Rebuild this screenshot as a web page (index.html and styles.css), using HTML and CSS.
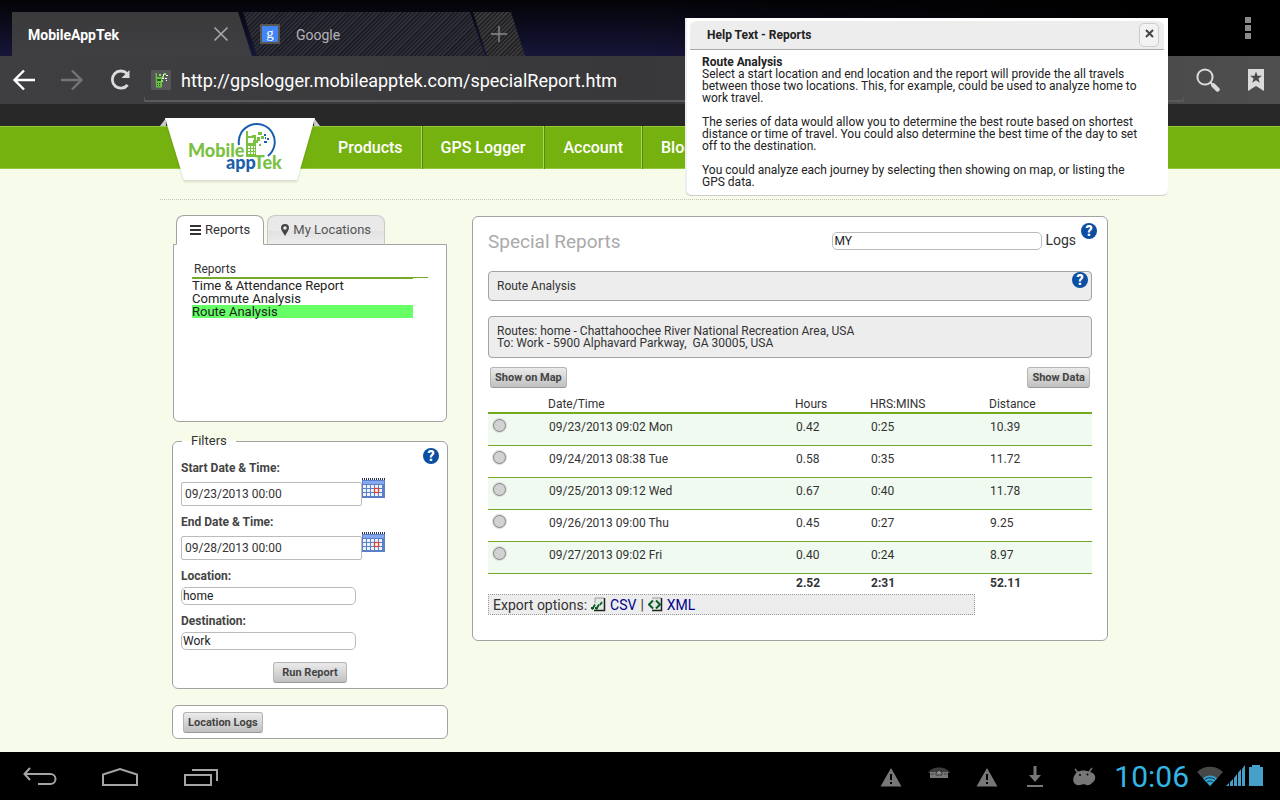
FILE: index.html
```html
<!DOCTYPE html>
<html lang="en">
<head>
<meta charset="utf-8">
<meta name="viewport" content="width=device-width, initial-scale=1">
<title>MobileAppTek</title>
<link rel="stylesheet" href="styles.css">
</head>
<body>
<header class="browser">
  <div class="tabbar">
    <div class="tab tab-active">
      <span class="tab-title">MobileAppTek</span>
      <button class="icon-btn" aria-label="Close tab"><svg width="16" height="16" viewBox="0 0 16 16" fill="none" stroke="#aaaaac" stroke-width="1.6"><path d="M1.5 1.5l13 13M14.500 1.500l-13 13"/></svg></button>
    </div>
    <div class="tab tab-idle">
      <svg width="20" height="20" viewBox="0 0 20 20"><rect width="20" height="20" rx="1" fill="#5a554e"/><rect x="2" y="2" width="16" height="16" fill="#4285f4"/><text x="10" y="14" text-anchor="middle" class="g-mark">g</text></svg>
      <span class="tab-title">Google</span>
    </div>
    <button class="tab tab-new" aria-label="New tab"><svg width="18" height="18" viewBox="0 0 18 18" fill="none" stroke="#8b8b8e" stroke-width="1.4"><path d="M9 1v16M1 9h16"/></svg></button>
    <button class="icon-btn tab-menu" aria-label="Menu"><svg width="6" height="22" viewBox="0 0 6 22" fill="#8a8a8a"><path d="M0 0h6v6H0zM0 8h6v6H0zM0 16h6v6H0z"/></svg></button>
  </div>
  <div class="toolbar">
    <button class="icon-btn" aria-label="Back"><svg width="24" height="24" viewBox="0 0 24 24" fill="none" stroke="#fff" stroke-width="2.4"><path d="M12 2.500L2.500 12l9.500 9.500M3 12h20"/></svg></button>
    <button class="icon-btn" aria-label="Forward"><svg width="24" height="24" viewBox="0 0 24 24" fill="none" stroke="#747476" stroke-width="2.400"><path d="M12 2.500l9.500 9.500-9.500 9.500M21 12H1"/></svg></button>
    <button class="icon-btn" aria-label="Reload"><svg width="24" height="24" viewBox="0 0 24 24"><path d="M19 5.500A8.600 8.600 0 1 0 19.600 17" fill="none" stroke="#dcdcdc" stroke-width="2.800"/><path d="M21.500 2v8h-8z" fill="#dcdcdc"/></svg></button>
    <div class="address">
      <svg width="20" height="20" viewBox="0 0 20 20"><rect width="20" height="20" rx="1" fill="#57575a"/><path d="M4.500 3h1.500v4h5v10.500H5z" fill="#6abd45"/><path d="M6 9h4v2H6zM6 13h1v1H6zM8 13h1v1H8zM6 15h1v1H6zM8 15h1v1H8z" fill="#265a1e"/><path d="M8 4h2v2H8zM11 6h2v2h-2zM13 3h2v2h-2zM10 10h2v2h-2z" fill="#8fdc68"/><path d="M12 4h1v2h-1zM15 5h2v1h-2zM14 8h2v1h-2zM11 8h2v1h-2zM15 10h1v1h-1z" fill="#fff"/></svg>
      <input class="url" aria-label="Address" value="http://gpslogger.mobileapptek.com/specialReport.htm">
    </div>
    <button class="icon-btn" aria-label="Search"><svg width="24" height="24" viewBox="0 0 24 24" fill="none" stroke="#dadada"><circle cx="9" cy="9" r="7.600" stroke-width="2"/><path d="M14.500 14.500l3 3" stroke-width="2"/><path d="M17.500 17.500l4 4" stroke-width="4.500" stroke-linecap="round"/></svg></button>
    <button class="icon-btn" aria-label="Bookmarks"><svg width="16" height="22" viewBox="0 0 16 22"><path d="M0 0h16v22l-8-5-8 5z" fill="#dadada"/><path d="M8 2.500l1.500 4.200 4.500.1-3.600 2.700 1.300 4.300L8 11.300l-3.700 2.500 1.300-4.300L2 6.800l4.500-.1z" fill="#4a4a4a"/></svg></button>
  </div>
</header>

<div class="site-head">
  <div class="wrap head-row">
    <a class="logo" href="#" aria-label="Mobile appTek">
      <svg width="160" height="68" viewBox="0 0 160 68">
        <path d="M0 8l6-8v8zM160 8l-6-8v8z" fill="#c9c9c9"/>
        <path class="logo-plate" d="M5 0h150l-18 62H24z" fill="#fff"/>
        <path d="M79 27A18 18 0 1 1 108 38" fill="none" stroke="#1d5fae" stroke-width="2"/>
        <text x="28" y="39" class="logo-text green">Mobile</text>
        <path d="M86 13h2v5h8v21H86z" fill="#7ac142"/>
        <path d="M88 20h6v5h-6zM88 28h2v2h-2zM91 28h2v2h-2zM94 28h1v2h-1zM88 31h2v2h-2zM91 31h2v2h-2zM94 31h1v2h-1zM88 34h2v2h-2zM91 34h2v2h-2zM94 34h1v2h-1z" fill="#fff"/>
        <path d="M92 17h4v3h-4zM97 19h3v4h-3zM98 14h4v3h-4zM101 18h3v3h-3zM93 22h5v3h-5zM99 26h2v2h-2z" fill="#7ac142"/>
        <path d="M104 16h2v2h-2zM107 20h2v2h-2zM104 23h3v2h-3zM105 19h1v2h-1z" fill="#1d5fae"/>
        <text x="66" y="51" class="logo-text"><tspan class="blue">app</tspan><tspan class="green">Tek</tspan></text>
      </svg>
    </a>
    <nav class="nav"><a href="#">Products</a><a href="#">GPS Logger</a><a href="#">Account</a><a href="#">Blog</a></nav>
  </div>
</div>

<main class="wrap page">
  <aside class="side">
    <section class="tabs-box">
      <div class="side-tabs">
        <button class="side-tab on"><svg width="11" height="10" viewBox="0 0 11 10" fill="#333"><path d="M0 0h11v2H0zM0 4h11v2H0zM0 8h11v2H0z"/></svg>Reports</button>
        <button class="side-tab"><svg width="8" height="12" viewBox="0 0 8 12" fill="#444"><path fill-rule="evenodd" d="M4 0a4 4 0 0 1 4 4c0 2-2.500 5-4 8C2.500 9 0 6 0 4a4 4 0 0 1 4-4zm0 2.200a1.800 1.800 0 1 0 0 3.600 1.800 1.800 0 0 0 0-3.600z"/></svg>My Locations</button>
      </div>
      <div class="side-panel">
        <h3 class="list-head">Reports</h3>
        <ul class="report-list"><li>Time &amp; Attendance Report</li><li>Commute Analysis</li><li class="picked">Route Analysis</li></ul>
      </div>
    </section>

    <fieldset class="filters">
      <legend>Filters</legend>
      <button class="help filters-help" aria-label="Help">?</button>
      <label for="start">Start Date &amp; Time:</label>
      <div class="date-row">
        <input id="start" class="date" value="09/23/2013 00:00">
        <button class="icon-btn" aria-label="Pick start date"><svg width="23" height="20" viewBox="0 0 23 20"><rect y="2" width="23" height="18" fill="#5c80c8"/><path d="M1 3h21v3H1z" fill="#86a8ee"/><path d="M0 1h23" stroke="#26314f" stroke-width="2" stroke-dasharray="1 1"/><path d="M1 7h3v3H1zM5 7h3v3H5zM9 7h3v3H9zM13 7h3v3h-3zM17 7h3v3h-3zM1 11h3v3H1zM5 11h3v3H5zM9 11h3v3H9zM13 11h3v3h-3zM17 11h3v3h-3zM1 15h3v3H1zM5 15h3v3H5zM9 15h3v3H9zM13 15h3v3h-3zM17 15h3v3h-3z" fill="#edf4ff"/><rect x="12.500" y="10.500" width="4" height="4" fill="#fff" stroke="#e0442c" stroke-width="1.300"/></svg></button>
      </div>
      <label for="end">End Date &amp; Time:</label>
      <div class="date-row">
        <input id="end" class="date" value="09/28/2013 00:00">
        <button class="icon-btn" aria-label="Pick end date"><svg width="23" height="20" viewBox="0 0 23 20"><rect y="2" width="23" height="18" fill="#5c80c8"/><path d="M1 3h21v3H1z" fill="#86a8ee"/><path d="M0 1h23" stroke="#26314f" stroke-width="2" stroke-dasharray="1 1"/><path d="M1 7h3v3H1zM5 7h3v3H5zM9 7h3v3H9zM13 7h3v3h-3zM17 7h3v3h-3zM1 11h3v3H1zM5 11h3v3H5zM9 11h3v3H9zM13 11h3v3h-3zM17 11h3v3h-3zM1 15h3v3H1zM5 15h3v3H5zM9 15h3v3H9zM13 15h3v3h-3zM17 15h3v3h-3z" fill="#edf4ff"/><rect x="12.500" y="10.500" width="4" height="4" fill="#fff" stroke="#e0442c" stroke-width="1.300"/></svg></button>
      </div>
      <label for="loc">Location:</label>
      <input id="loc" class="field" value="home">
      <label for="dest">Destination:</label>
      <input id="dest" class="field" value="Work">
      <div class="run-row"><button class="btn">Run Report</button></div>
    </fieldset>

    <section class="card logs"><button class="btn">Location Logs</button></section>
  </aside>

  <section class="card report">
    <button class="help report-help" aria-label="Help">?</button>
    <div class="report-top">
      <h1>Special Reports</h1>
      <div class="logs-pick"><input id="who" class="field" value="MY"><label for="who">Logs</label></div>
    </div>
    <div class="strip name-strip">Route Analysis<button class="help strip-help" aria-label="Help">?</button></div>
    <div class="strip route-strip">Routes: home - Chattahoochee River National Recreation Area, USA<br>To: Work - 5900 Alphavard Parkway,&nbsp; GA 30005, USA</div>
    <div class="actions"><button class="btn">Show on Map</button><button class="btn">Show Data</button></div>
    <table class="trips">
      <colgroup><col class="c-pick"><col class="c-date"><col class="c-hours"><col class="c-mins"><col></colgroup>
      <thead><tr><th></th><th>Date/Time</th><th>Hours</th><th>HRS:MINS</th><th>Distance</th></tr></thead>
      <tbody>
        <tr><td><input type="radio" name="trip" aria-label="09/23/2013"></td><td>09/23/2013 09:02 Mon</td><td>0.42</td><td>0:25</td><td>10.39</td></tr>
        <tr><td><input type="radio" name="trip" aria-label="09/24/2013"></td><td>09/24/2013 08:38 Tue</td><td>0.58</td><td>0:35</td><td>11.72</td></tr>
        <tr><td><input type="radio" name="trip" aria-label="09/25/2013"></td><td>09/25/2013 09:12 Wed</td><td>0.67</td><td>0:40</td><td>11.78</td></tr>
        <tr><td><input type="radio" name="trip" aria-label="09/26/2013"></td><td>09/26/2013 09:00 Thu</td><td>0.45</td><td>0:27</td><td>9.25</td></tr>
        <tr><td><input type="radio" name="trip" aria-label="09/27/2013"></td><td>09/27/2013 09:02 Fri</td><td>0.40</td><td>0:24</td><td>8.97</td></tr>
      </tbody>
      <tfoot><tr><td></td><td></td><td>2.52</td><td>2:31</td><td>52.11</td></tr></tfoot>
    </table>
    <div class="export">
      <span>Export options:</span>
      <a href="#"><svg width="15" height="15" viewBox="0 0 15 15"><path d="M4 1h9v12H3z" fill="#dfe8e2"/><path d="M13.500 1v12.500H3" fill="none" stroke="#222" stroke-width="1.500"/><path d="M4 1v5M4 1h9" stroke="#9a9a9a"/><path d="M1 12.500l3-5M5 12.500l3-5M0 11h3M4 11h3M9 8l2-3" stroke="#0c5a2a" stroke-width="1.800"/></svg>CSV</a>
      <span>|</span>
      <a href="#"><svg width="15" height="15" viewBox="0 0 15 15"><path d="M4 1h9v12H4z" fill="#dfe8e2"/><path d="M13.500 1v12.500H4" fill="none" stroke="#222" stroke-width="1.500"/><path d="M4 1h9" stroke="#9a9a9a"/><path d="M5 3.500L1 7.500l4 4M8 3.500l4 4-4 4" fill="none" stroke="#0c5a2a" stroke-width="2"/></svg>XML</a>
    </div>
  </section>
</main>

<footer class="system">
  <button class="icon-btn" aria-label="Back"><svg width="34" height="20" viewBox="0 0 34 20" fill="none" stroke="#a5a5a5" stroke-width="2"><path d="M7 1L1.500 7 7 13M2 7h25.500a5 5 0 0 1 0 10H15"/></svg></button>
  <button class="icon-btn" aria-label="Home"><svg width="38" height="20" viewBox="0 0 38 20" fill="none" stroke="#a5a5a5" stroke-width="2"><path d="M2 18V7.500L19 2l17 5.500V18z"/></svg></button>
  <button class="icon-btn" aria-label="Recent apps"><svg width="36" height="20" viewBox="0 0 36 20" fill="none" stroke="#a5a5a5" stroke-width="2"><path d="M2 8h26v10H2zM9 3h25v11"/></svg></button>
  <div class="status">
    <div class="notices">
      <svg width="22" height="20" viewBox="0 0 22 20"><path d="M11 1l10.500 18.500H.5z" fill="#777"/><path d="M10 7h2v6h-2zM10 15h2v2h-2z" fill="#000"/></svg>
      <svg width="22" height="20" viewBox="0 0 22 20"><path d="M0 6C3-1.500 19-1.500 22 6z" fill="#3c3c3c"/><path d="M2 5h18v6H2z" fill="#777"/><path d="M8 6l3-3 3 3v2H8z" fill="#888" stroke="#333"/><path d="M3 7h3M16 7h3" stroke="#444"/></svg>
      <svg width="22" height="20" viewBox="0 0 22 20"><path d="M11 1l10.500 18.500H.5z" fill="#777"/><path d="M10 7h2v6h-2zM10 15h2v2h-2z" fill="#000"/></svg>
      <svg width="22" height="22" viewBox="0 0 22 22"><path d="M9.500 0h3v9H17l-6 7-6-7h4.500zM3 19h16v2H3z" fill="#777"/></svg>
      <svg width="24" height="20" viewBox="0 0 24 20"><path d="M3 2l3 4M20 1l-3 4" stroke="#777" stroke-width="1.400"/><path d="M5 5c4-2 9-2 13 0 4 1 6 4 5 7-1 3-2 3-4 5-3 2-5 1-7 0-3 1-6 2-9 0-3-3-2-8 2-12z" fill="#777"/><circle cx="8" cy="8" r="1" fill="#000"/><circle cx="15.500" cy="7.500" r="1" fill="#000"/></svg>
    </div>
    <span class="clock">10:06</span>
    <div class="signals">
      <svg width="26" height="20" viewBox="0 0 26 20"><path d="M0 6C7-1 19-1 26 6L13 20z" fill="#474747"/><path d="M6 12.500c4-4 10-4 14 0L13 20z" fill="#35a5d3"/><path d="M7.500 14c3-3 8-3 11 0M9.500 16.500c2-2 5-2 7 0" fill="none" stroke="#0a2c3a"/></svg>
      <svg width="20" height="22" viewBox="0 0 20 22" fill="#469fc9"><path d="M0 21l3-3v3zM4 17l3-3v7H4zM8 13l3-4v12H8zM12 8l3-4v17h-3zM16 4l3-4v21h-3z"/></svg>
      <svg width="14" height="22" viewBox="0 0 14 22" fill="#469fc9"><path d="M3 0h8v2h3v19H0V2h3z"/></svg>
    </div>
  </div>
</footer>

<div class="dialog" role="dialog" aria-labelledby="dlg">
  <div class="dialog-head"><h2 id="dlg">Help Text - Reports</h2><button class="dialog-close" aria-label="Close"><svg width="9" height="9" viewBox="0 0 9 9" stroke="#444" stroke-width="2"><path d="M1 1l7 7M8 1L1 8"/></svg></button></div>
  <div class="dialog-body">
    <h4>Route Analysis</h4>
    <p>Select a start location and end location and the report will provide the all travels<br>between those two locations. This, for example, could be used to analyze home to<br>work travel.</p>
    <p>The series of data would allow you to determine the best route based on shortest<br>distance or time of travel. You could also determine the best time of the day to set<br>off to the destination.</p>
    <p>You could analyze each journey by selecting then showing on map, or listing the<br>GPS data.</p>
  </div>
</div>
</body>
</html>
```
FILE: styles.css
```css
* { box-sizing: border-box; }
body { margin: 0; min-height: 100vh; display: flex; flex-direction: column; position: relative; background: #f7fbea; color: #333; font: 12px/12px Roboto, "Liberation Sans", sans-serif; }
h1, h2, h3, h4, p, ul { margin: 0; padding: 0; }
button, input { font: inherit; color: inherit; margin: 0; }
svg { display: block; flex: none; }
.icon-btn { flex: none; display: grid; place-items: center; padding: 0; border: 0; background: none; }

.browser { color: #fff; }
.tabbar { display: flex; height: 56px; padding: 12px 29px 0 12px; background: linear-gradient(90deg, rgba(0,0,0,0) 50%, #000 90%), linear-gradient(#030306, #17163a); }
.tab { display: flex; align-items: center; font-size: 14px; line-height: 20px; }
.tab-active { width: 240px; padding: 0 23px 0 16px; justify-content: space-between; background: linear-gradient(#3a3a3b, #3f3f43); clip-path: polygon(0 0, 226px 0, 100% 100%, 0 100%); font-weight: 700; }
.tab-title { padding-top: 1px; }
.tab-idle, .tab-new { background: repeating-linear-gradient(135deg, #3b3b3d 0, #3b3b3d 1px, #202022 2px, #202022 3px); }
.tab-idle { width: 242px; margin-left: -9px; padding-left: 17px; gap: 16px; color: #b4b4b8; background: repeating-linear-gradient(135deg, #303038 0, #303038 1px, #1b1b25 2px, #1b1b25 3px); clip-path: polygon(0 0, 227px 0, 100% 100%, 14px 100%); }
.tab-new { width: 52px; margin-left: -12px; padding: 0; border: 0; justify-content: center; clip-path: polygon(0 0, 38px 0, 100% 100%, 14px 100%); }
.g-mark { font: 15px "Liberation Serif", serif; fill: #fff; }
.tab-menu { margin-left: auto; padding-bottom: 12px; }
.toolbar { display: flex; align-items: center; height: 48px; padding: 0 12px; background: linear-gradient(90deg, #3f3f42, #38383b 50%, #4f4f4f); }
.toolbar > .icon-btn { width: 24px; }
.toolbar > .icon-btn + .icon-btn { margin-left: 24px; }
.address { flex: 1; display: flex; align-items: center; gap: 10px; height: 44px; margin: 0 12px; padding: 2px 7px 0 6px; border: 1px solid #5a5a5c; border-width: 0 1px 2px; border-image: linear-gradient(transparent 90%, #5a5a5c 90%) 1; }
.url { flex: 1; min-width: 0; padding: 1px 0 0; border: 0; background: none; font-size: 18px; line-height: 24px; }

.wrap { width: 100%; max-width: 960px; margin: 0 auto; }
.site-head { border-top: 22px solid #282828; background: #76b20f; box-shadow: inset 0 1px #93c83d, inset 0 -1px #93c83d; }
.head-row { display: flex; height: 43px; }
.logo { flex: none; height: 68px; margin-top: -8px; }
.logo-plate { filter: drop-shadow(0 2px 1px rgba(0,0,0,.12)); }
.logo-text { font: 900 18px Lato, sans-serif; }
.green { fill: #7ac142; }
.blue { fill: #1d5fae; }
.nav { display: flex; min-width: 0; }
.nav a { display: flex; align-items: center; padding: 0 18px; border-right: 1px solid #a6d95c; box-shadow: 1px 0 #568a05; color: #fff; font-weight: 500; font-size: 16px; line-height: 20px; text-decoration: none; white-space: nowrap; }
.nav a + a { padding: 0 18px 0 19px; }
.nav a:last-child { border: 0; box-shadow: none; }

.page { flex: 1; display: flex; align-items: flex-start; gap: 24px; padding: 16px 12px 13px; margin-top: 30px; background: linear-gradient(90deg, #c3c8b6 50%, transparent 50%) 0 0 / 2px 1px repeat-x; }
.side { flex: 0 0 276px; display: flex; flex-direction: column; }
.card { position: relative; border: 1px solid #a2a2a2; border-radius: 6px; background: #fff; }
.tabs-box { padding: 0 1px; }
.side-tabs { display: flex; gap: 3px; padding: 0 3px; }
.side-tab { display: flex; align-items: center; gap: 4px; height: 30px; margin-bottom: -1px; padding: 0 13px; border: 1px solid #c8c8c8; border-bottom-color: #a2a2a2; border-radius: 8px 8px 0 0; background: linear-gradient(#e9e9e9 55%, #e2e2e2 55%, #ededed); color: #555; font-size: 13px; line-height: 16px; }
.side-tab.on { position: relative; border-color: #a2a2a2; border-bottom-color: #fff; background: #fff; color: #333; }
.side-panel { height: 178px; padding: 18px; border: 1px solid #a2a2a2; border-radius: 0 0 6px 6px; background: #fff; }
.list-head { padding: 0 2px 2px; border-bottom: 1px solid #76a82a; font-weight: 400; font-size: 12px; line-height: 12px; }
.report-list { width: 221px; border-top: 1px solid #76a82a; list-style: none; font-size: 13px; line-height: 13px; color: #222; }
.picked { background: #66ff66; }

.filters { position: relative; min-width: 0; margin: 12px 0 0; padding: 14px 8px 5px; border: 1px solid #a2a2a2; border-radius: 6px; background: #fff; }
.filters legend { margin-left: 1px; padding: 0 9px; font-size: 13px; line-height: 14px; }
.filters label { display: block; font-weight: 700; line-height: 12px; color: #444; }
.date-row { display: flex; align-items: flex-start; margin: 4px 0 10px; }
.date { width: 181px; height: 24px; margin-top: 4px; padding: 0 3px; border: 1px solid #bbb; border-radius: 2px; background: #fff; }
.field { width: 175px; height: 18px; padding: 0 1px; border: 1px solid #bbb; border-radius: 5px; background: #fff; color: #222; }
.filters .field { display: block; margin: 5px 0 10px; }
.run-row { display: flex; justify-content: center; margin-top: 12px; }
.btn { height: 21px; padding: 0 8px; border: 1px solid #b4b4b4; border-bottom-color: #999; border-radius: 3px; background: linear-gradient(#ebebeb, #c0c0c0); color: #444; font-weight: 700; font-size: 11px; line-height: 14px; }
.logs { margin-top: 16px; padding: 6px 10px 5px; }
.logs .btn, .actions .btn { padding: 0 4px; }
.help { position: absolute; width: 16px; height: 16px; padding: 0; border: 0; border-radius: 50%; background: #0b4ea2; color: #fff; font-weight: 900; font-size: 14px; line-height: 16px; text-align: center; }
.filters-help { top: 0; right: 8px; }
.report-help { top: 6px; right: 10px; }
.strip-help { top: 0; right: 3px; }

.report { flex: 1; min-width: 0; margin-top: 1px; padding: 13px 15px 25px; }
.report-top { display: flex; justify-content: space-between; align-items: flex-start; margin-bottom: 17px; padding-right: 16px; }
h1 { color: #aaa; font-weight: 400; font-size: 19px; line-height: 24px; }
.logs-pick { display: flex; align-items: center; gap: 3px; padding-top: 2px; }
.logs-pick .field { width: 210px; }
.logs-pick label { padding-bottom: 2px; font-size: 14px; line-height: 16px; }
.strip { position: relative; margin-bottom: 15px; padding: 8px; border: 1px solid #a2a2a2; border-radius: 4px; background: #ededed; }
.route-strip { margin-bottom: 9px; }
.actions { display: flex; justify-content: space-between; padding: 0 2px; }
.trips { width: 100%; table-layout: fixed; border-collapse: collapse; }
.c-pick { width: 60px; }
.c-date { width: 247px; }
.c-hours { width: 75px; }
.c-mins { width: 119px; }
.trips th { padding: 10px 0 2px; border-bottom: 2px solid #73ab1e; font-weight: 400; text-align: left; }
.trips td { padding: 0 1px; }
.trips tbody td { height: 32px; padding-bottom: 5px; border-bottom: 1px solid #76a82a; }
.trips tbody tr:nth-child(odd) { background: #f0faf0; }
.trips tfoot td { height: 19px; font-weight: 700; }
.trips input { display: block; appearance: none; width: 13px; height: 13px; margin: 0 4px 2px; border: 1px solid #888; border-radius: 50%; background: #d2d2d2; box-shadow: 0 0 0 1px #ddd; }
.export { display: flex; align-items: center; gap: 4px; width: 487px; max-width: 100%; height: 21px; margin-top: 2px; padding: 0 4px; border: 1px dotted #999; background: #ededed; font-size: 14px; line-height: 18px; }
.export a { display: flex; align-items: center; gap: 4px; color: #00008b; text-decoration: none; }

.system { display: flex; align-items: center; height: 48px; padding: 2px 17px 0 23px; background: #000; }
.system > .icon-btn + .icon-btn { margin-left: 44px; }
.status, .notices, .signals { display: flex; align-items: center; }
.status { margin-left: auto; }
.notices { gap: 26px; margin-right: 18px; }
.clock { color: #33b5e5; font-weight: 400; font-size: 30px; line-height: 36px; }
.signals { gap: 3px; margin-left: 8px; padding-bottom: 2px; }

.dialog { position: absolute; top: 18px; right: 112px; width: 483px; padding: 3px 4px 7px 5px; border-bottom: 1px solid #ccc; border-radius: 0 0 6px 6px; background: #fff; box-shadow: inset 2px 0 #eee; }
.dialog-head { display: flex; align-items: center; justify-content: space-between; height: 29px; padding: 0 5px 0 17px; border-bottom: 1px solid #aaa; border-radius: 6px 6px 0 0; background: #ededed; }
.dialog h2, .dialog h4 { font-weight: 700; font-size: 12px; line-height: 12px; color: #222; }
.dialog-close { display: grid; place-items: center; width: 20px; height: 24px; padding: 0 0 3px; border: 1px solid #ccc; border-radius: 5px; background: #f2f2f2; }
.dialog-body { padding: 6px 12px 0; color: #222; }
.dialog-body p + p { margin-top: 12px; }
```
